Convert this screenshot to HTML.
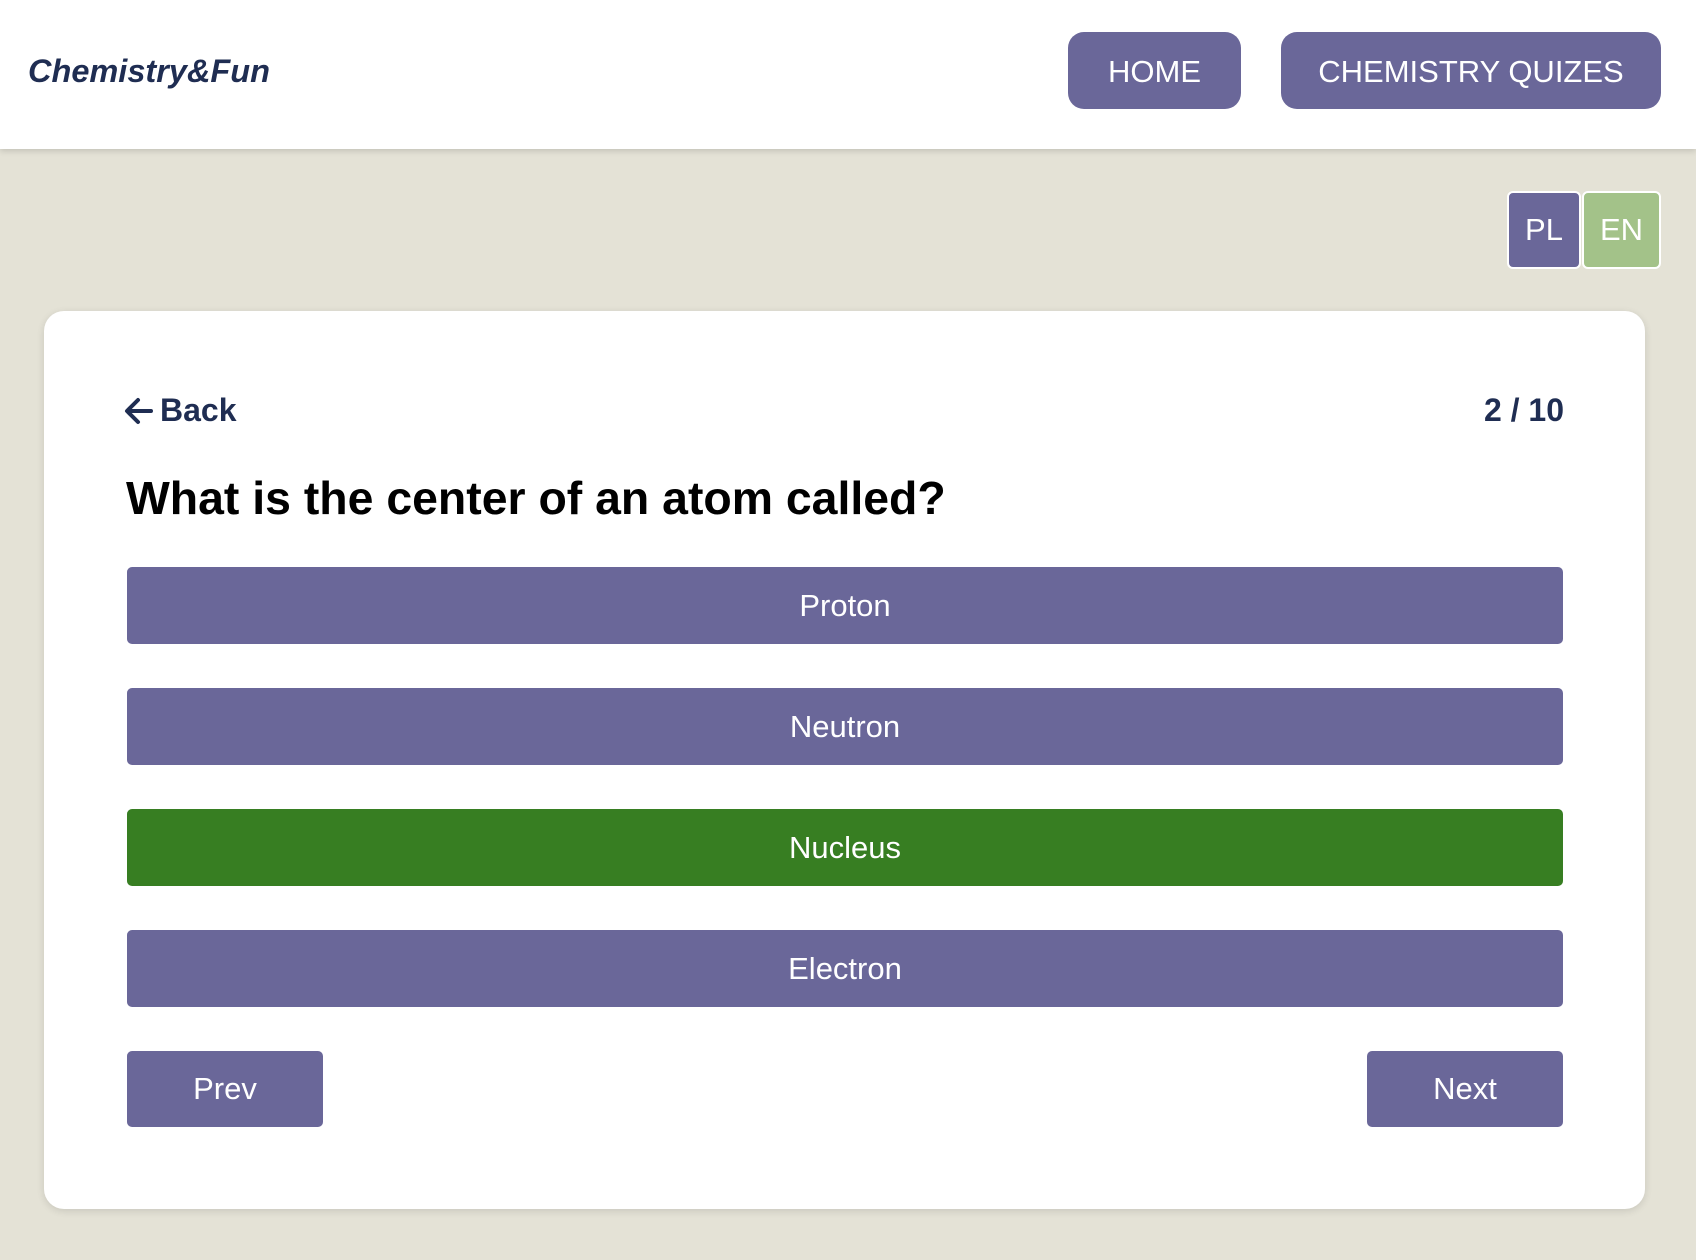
<!DOCTYPE html>
<html><head><meta charset="utf-8"><style>
*{box-sizing:border-box;margin:0;padding:0}
body{width:1696px;height:1260px;background:#e4e2d6;font-family:"Liberation Sans",sans-serif;position:relative;overflow:hidden}
.hdr{position:absolute;left:0;top:0;width:1696px;height:149px;background:#fff;box-shadow:0 2px 6px rgba(0,0,0,.15)}
.logo{position:absolute;left:28px;top:53px;font-size:32.5px;font-weight:bold;font-style:italic;color:#1f2d52}
.nb{position:absolute;top:32px;height:77px;background:#6a6799;color:#fff;border-radius:16px;font-size:31px;display:flex;align-items:center;justify-content:center;padding-top:3px}
.lg{position:absolute;top:191px;height:78px;width:74px;color:#fff;font-size:31px;display:flex;align-items:center;justify-content:center;border-radius:6px;border:2px solid #fff}
.card{position:absolute;left:44px;top:311px;width:1601px;height:898px;background:#fff;border-radius:20px;box-shadow:0 2px 8px rgba(0,0,0,.12)}
.back{position:absolute;left:124px;top:392px;font-size:32px;font-weight:bold;color:#1f2d52;display:flex;align-items:center;gap:6px}
.cnt{position:absolute;right:132px;top:392px;font-size:32px;font-weight:bold;color:#1f2d52}
.q{position:absolute;left:126px;top:471px;font-size:46.4px;font-weight:bold;color:#000}
.opt{position:absolute;left:127px;width:1436px;height:77px;background:#6a6799;color:#fff;font-size:31px;display:flex;align-items:center;justify-content:center;border-radius:5px}
.pn{position:absolute;top:1051px;width:196px;height:76px;background:#6a6799;color:#fff;font-size:31px;display:flex;align-items:center;justify-content:center;border-radius:5px}
</style></head><body>
<div class="hdr">
<div class="logo">Chemistry&amp;Fun</div>
<div class="nb" style="left:1068px;width:173px">HOME</div>
<div class="nb" style="left:1281px;width:380px">CHEMISTRY QUIZES</div>
</div>
<div class="lg" style="left:1507px;background:#6a6799">PL</div>
<div class="lg" style="left:1582px;width:79px;background:#a3c289">EN</div>
<div class="card"></div>
<div class="back"><svg width="30" height="28" viewBox="0 0 30 28"><path d="M27 14H4M14 3L3 14l11 11" fill="none" stroke="#1f2d52" stroke-width="4" stroke-linecap="round" stroke-linejoin="round"/></svg>Back</div>
<div class="cnt">2 / 10</div>
<div class="q">What is the center of an atom called?</div>
<div class="opt" style="top:567px">Proton</div>
<div class="opt" style="top:688px">Neutron</div>
<div class="opt" style="top:809px;background:#377e22">Nucleus</div>
<div class="opt" style="top:930px">Electron</div>
<div class="pn" style="left:127px">Prev</div>
<div class="pn" style="left:1367px">Next</div>
</body></html>
